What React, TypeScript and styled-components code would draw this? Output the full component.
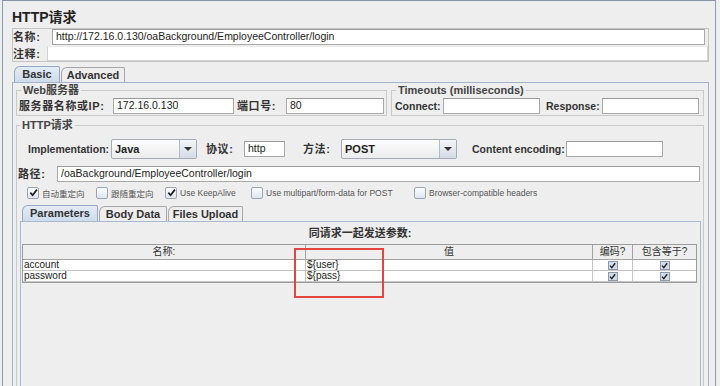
import React from 'react';
import styled, { createGlobalStyle } from 'styled-components';

const GlobalStyle = createGlobalStyle`
  html, body { margin: 0; padding: 0; background: #eeeeee; }
  body { font-family: "Liberation Sans", Arial, "Noto Sans CJK SC", sans-serif; color: #333; }
  * { box-sizing: border-box; }
`;

const Frame = styled.div`
  position: relative;
  margin-left: 2px;
  width: 714px;
  height: 386px;
  overflow: hidden;
  border-top: 1px solid #8794a8;
  border-left: 1px solid #8d9bb2;
  border-right: 1px solid #8d9bb2;
  padding: 0 6px 0 9px;
  display: flex;
  flex-direction: column;
`;

const Title = styled.div`
  height: 27px;
  padding-top: 8px;
  font-size: 14px;
  font-weight: bold;
  line-height: 17px;
  color: #222;
`;

const NameBox = styled.div`
  width: 697px;
  height: 34px;
  border: 1px solid #c4c4c4;
  display: flex;
  flex-direction: column;
`;

const Row = styled.div<{ mt?: number; h?: number; pl?: number }>`
  display: flex;
  align-items: center;
  margin-top: ${p => p.mt ?? 0}px;
  height: ${p => p.h ?? 16}px;
  padding-left: ${p => p.pl ?? 0}px;
  flex-shrink: 0;
`;

const Label = styled.div<{ w: number; cjk?: boolean; ml?: number }>`
  width: ${p => p.w}px;
  margin-left: ${p => p.ml ?? 0}px;
  flex-shrink: 0;
  font-size: ${p => (p.cjk ? 11 : 10.5)}px;
  letter-spacing: ${p => (p.cjk ? 0.6 : 0)}px;
  font-weight: bold;
  color: #333;
  white-space: nowrap;
  line-height: 14px;
`;

const Field = styled.div<{ w?: number; h?: number; mr?: number; soft?: boolean }>`
  ${p => (p.w ? `width: ${p.w}px;` : 'flex: 1;')}
  height: ${p => p.h ?? 16}px;
  margin-right: ${p => p.mr ?? 0}px;
  flex-shrink: 0;
  background: #ffffff;
  border: 1px solid ${p => (p.soft ? '#d2d2d2' : '#a9a9a9')};
  border-top-color: ${p => (p.soft ? '#ececec' : '#9a9a9a')};
  font-size: 10.5px;
  line-height: ${p => (p.h ?? 16) - 3}px;
  padding-left: 3px;
  color: #222;
  white-space: nowrap;
  overflow: hidden;
`;

const TabStrip = styled.div<{ pl: number; mt: number }>`
  display: flex;
  align-items: flex-end;
  height: 16px;
  margin-top: ${p => p.mt}px;
  padding-left: ${p => p.pl}px;
  flex-shrink: 0;
`;

const Tab = styled.div<{ w: number; active?: boolean }>`
  width: ${p => p.w}px;
  height: ${p => (p.active ? 16 : 15)}px;
  margin-right: 1px;
  border: 1px solid ${p => (p.active ? '#93a9c6' : '#a6a6a6')};
  border-bottom: none;
  border-radius: 6px 2px 0 0;
  background: ${p => (p.active ? 'linear-gradient(#e3ecf6, #cddbeb)' : '#eeeeee')};
  font-size: 11px;
  font-weight: bold;
  color: #333;
  text-align: center;
  line-height: 14px;
`;

const TabPanel = styled.div`
  flex: 1;
  width: 697px;
  border: 1px solid #a2b5cd;
  border-bottom: none;
  padding: 0 4px 0 3px;
  display: flex;
  flex-direction: column;
  min-height: 0;
`;

const TopGroups = styled.div`
  display: flex;
  gap: 4px;
  margin-top: 1px;
  flex-shrink: 0;
`;

const Group = styled.fieldset<{ w: number }>`
  width: ${p => p.w}px;
  margin: 0;
  padding: 2px 1px 1px 1px;
  border: 1px solid #c9c9c9;
  min-width: 0;
  display: flex;
  align-items: center;
`;

const Legend = styled.legend`
  font-size: 11px;
  font-weight: bold;
  line-height: 12px;
  padding: 0 2px;
  margin-left: 3px;
  color: #444;
`;

const HttpGroup = styled.fieldset`
  flex: 1;
  margin: 3px 0 0 0;
  padding: 0;
  border: 1px solid #c9c9c9;
  border-bottom: none;
  min-width: 0;
  display: flex;
  flex-direction: column;
`;

const Combo = styled.div<{ w: number }>`
  width: ${p => p.w}px;
  height: 20px;
  flex-shrink: 0;
  display: flex;
  border: 1px solid #a3abb8;
  border-radius: 2px;
  background: linear-gradient(#fdfdfd, #ececec);
`;

const ComboText = styled.div`
  flex: 1;
  padding-left: 3px;
  font-size: 11px;
  font-weight: bold;
  line-height: 18px;
  color: #222;
`;

const ComboButton = styled.div`
  width: 17px;
  border-left: 1px solid #b2bac6;
  background: linear-gradient(#f3f6fa, #d3dbe6);
  display: flex;
  align-items: center;
  justify-content: center;
  &::after {
    content: '';
    border-left: 4px solid transparent;
    border-right: 4px solid transparent;
    border-top: 4px solid #333;
  }
`;

const Gap = styled.div<{ w: number }>`
  width: ${p => p.w}px;
  flex-shrink: 0;
`;

const CheckItem = styled.div<{ w?: number }>`
  ${p => (p.w ? `width: ${p.w}px;` : '')}
  flex-shrink: 0;
  display: flex;
  align-items: center;
  gap: 3px;
  font-size: 8.5px;
  color: #555;
  white-space: nowrap;
`;

const Box = styled.div`
  width: 12px;
  height: 12px;
  border: 1px solid #9aa6b8;
  border-radius: 2px;
  background: linear-gradient(#fbfcfe, #dfe6ef);
  display: flex;
  align-items: center;
  justify-content: center;
`;

const InnerWrap = styled.div`
  flex: 1;
  margin: 6px 2px 0 3px;
  display: flex;
  flex-direction: column;
  min-height: 0;
`;

const InnerPanel = styled.div`
  flex: 1;
  border: 1px solid #a8bad2;
  border-bottom: none;
  padding: 0 2px 0 1px;
  display: flex;
  flex-direction: column;
`;

const Caption = styled.div`
  height: 22px;
  padding-top: 3px;
  text-align: center;
  font-size: 11px;
  font-weight: bold;
  color: #333;
  line-height: 16px;
`;

const Table = styled.div`
  width: 675px;
  border: 1px solid #9c9c9c;
  display: grid;
  grid-template-columns: 283px 287px 40px 63px;
  grid-auto-rows: 11px;
  grid-template-rows: 15px;
`;

const HeadCell = styled.div<{ last?: boolean }>`
  background: #eeeeee;
  border-right: ${p => (p.last ? 'none' : '1px solid #a3a3a3')};
  border-bottom: 1px solid #a3a3a3;
  font-size: 10px;
  color: #333;
  text-align: center;
  line-height: 14px;
`;

const Cell = styled.div<{ center?: boolean; last?: boolean }>`
  background: #ffffff;
  border-right: ${p => (p.last ? 'none' : '1px solid #c4c4c4')};
  border-bottom: 1px solid #c4c4c4;
  font-size: 10px;
  line-height: 10px;
  color: #222;
  padding-left: ${p => (p.center ? 0 : 1)}px;
  display: flex;
  align-items: center;
  justify-content: ${p => (p.center ? 'center' : 'flex-start')};
`;

const MiniBox = styled.div`
  width: 10px;
  height: 9px;
  border: 1px solid #8c9aae;
  background: #d2dbe7;
  display: flex;
  align-items: center;
  justify-content: center;
`;

const Annotation = styled.div`
  position: absolute;
  left: 291px;
  top: 247px;
  width: 90px;
  height: 50px;
  border: 2px solid #e4463e;
  pointer-events: none;
`;

const Check = ({ s = 9 }: { s?: number }) => (
  <svg width={s} height={s} viewBox="0 0 10 10">
    <path d="M1.5 5.2 L4 8 L8.8 1.8" fill="none" stroke="#1e1e1e" strokeWidth="1.9" />
  </svg>
);

const CheckBox = ({ checked, label, w }: { checked?: boolean; label: string; w?: number }) => (
  <CheckItem w={w}>
    <Box>{checked && <Check />}</Box>
    {label}
  </CheckItem>
);

export default function App() {
  return (
    <>
      <GlobalStyle />
      <Frame>
        <Title>HTTP请求</Title>
        <NameBox>
          <Row>
            <Label w={39} cjk>名称:</Label>
            <Field mr={3} h={16}>http://172.16.0.130/oaBackground/EmployeeController/login</Field>
          </Row>
          <Row mt={1} h={15}>
            <Label w={34} cjk>注释:</Label>
            <Field h={15} soft />
          </Row>
        </NameBox>
        <TabStrip pl={2} mt={4}>
          <Tab w={46} active>Basic</Tab>
          <Tab w={64}>Advanced</Tab>
        </TabStrip>
        <TabPanel>
          <TopGroups>
            <Group w={371}>
              <Legend>Web服务器</Legend>
              <Label w={94} cjk ml={1}>服务器名称或IP:</Label>
              <Field w={121}>172.16.0.130</Field>
              <Label w={49} cjk ml={3}>端口号:</Label>
              <Field w={98}>80</Field>
            </Group>
            <Group w={313}>
              <Legend>Timeouts (milliseconds)</Legend>
              <Label w={48} ml={2}>Connect:</Label>
              <Field w={97} />
              <Label w={56} ml={6}>Response:</Label>
              <Field w={97} />
            </Group>
          </TopGroups>
          <HttpGroup>
            <Legend>HTTP请求</Legend>
            <Row mt={8} h={20} pl={11}>
              <Label w={83}>Implementation:</Label>
              <Combo w={86}>
                <ComboText>Java</ComboText>
                <ComboButton />
              </Combo>
              <Gap w={9} />
              <Label w={38} cjk>协议:</Label>
              <Field w={41}>http</Field>
              <Gap w={18} />
              <Label w={38} cjk>方法:</Label>
              <Combo w={116}>
                <ComboText>POST</ComboText>
                <ComboButton />
              </Combo>
              <Gap w={15} />
              <Label w={94}>Content encoding:</Label>
              <Field w={97} />
            </Row>
            <Row mt={7} h={16} pl={1}>
              <Label w={39} cjk>路径:</Label>
              <Field w={643}>/oaBackground/EmployeeController/login</Field>
            </Row>
            <Row mt={4} h={13} pl={10}>
              <CheckBox checked label="自动重定向" w={69} />
              <CheckBox label="跟随重定向" w={69} />
              <CheckBox checked label="Use KeepAlive" w={86} />
              <CheckBox label="Use multipart/form-data for POST" w={163} />
              <CheckBox label="Browser-compatible headers" />
            </Row>
            <InnerWrap>
              <TabStrip pl={2} mt={0}>
                <Tab w={76} active>Parameters</Tab>
                <Tab w={68}>Body Data</Tab>
                <Tab w={75}>Files Upload</Tab>
              </TabStrip>
              <InnerPanel>
                <Caption>同请求一起发送参数:</Caption>
                <Table>
                  <HeadCell>名称:</HeadCell>
                  <HeadCell>值</HeadCell>
                  <HeadCell>编码?</HeadCell>
                  <HeadCell last>包含等于?</HeadCell>
                  <Cell>account</Cell>
                  <Cell>${'{'}user{'}'}</Cell>
                  <Cell center><MiniBox><Check s={7} /></MiniBox></Cell>
                  <Cell center last><MiniBox><Check s={7} /></MiniBox></Cell>
                  <Cell>password</Cell>
                  <Cell>${'{'}pass{'}'}</Cell>
                  <Cell center><MiniBox><Check s={7} /></MiniBox></Cell>
                  <Cell center last><MiniBox><Check s={7} /></MiniBox></Cell>
                </Table>
              </InnerPanel>
            </InnerWrap>
          </HttpGroup>
        </TabPanel>
        <Annotation />
      </Frame>
    </>
  );
}
